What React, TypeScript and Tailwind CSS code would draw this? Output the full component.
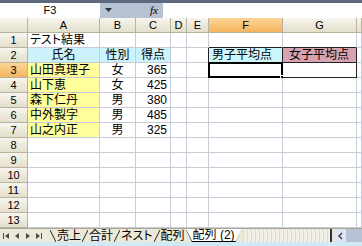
import type { ReactNode } from 'react';

const COLS = ['A', 'B', 'C', 'D', 'E', 'F', 'G', ''];

type Row = { a?: string; b?: string; c?: string };

const rows: Row[] = [
  { a: 'テスト結果' },
  { a: '氏名', b: '性別', c: '得点' },
  { a: '山田真理子', b: '女', c: '365' },
  { a: '山下恵', b: '女', c: '425' },
  { a: '森下仁丹', b: '男', c: '380' },
  { a: '中外製字', b: '男', c: '485' },
  { a: '山之内正', b: '男', c: '325' },
  {}, {}, {}, {}, {}, {},
];

const grid = 'border-r border-b border-[#c7ccd8]';
const head = 'border-r border-b border-[#b7b39f] bg-gradient-to-b from-[#f7f5ee] to-[#e3dfcb]';
const headSel = 'border-r border-b border-[#b7b39f] bg-gradient-to-b from-[#fcd596] to-[#f4b45e]';

function Cell({ className = '', children }: { className?: string; children?: ReactNode }) {
  return <div className={`relative flex items-end overflow-visible whitespace-nowrap leading-[14px] ${className}`}>{children}</div>;
}

function Slash({ dir }: { dir: 'l' | 'r' }) {
  return (
    <svg width="6" height="14" className="shrink-0">
      {dir === 'l' ? <line x1="0" y1="1" x2="6" y2="13" stroke="#222" /> : <line x1="6" y1="1" x2="0" y2="13" stroke="#222" />}
    </svg>
  );
}

function Nav({ kind }: { kind: 'first' | 'prev' | 'next' | 'last' }) {
  return (
    <svg width="10" height="14" className="shrink-0">
      {kind === 'first' && (
        <>
          <rect x="2" y="4" width="1" height="6" fill="#4a4a4a" />
          <polygon points="8,4 4,7 8,10" fill="#4a4a4a" />
        </>
      )}
      {kind === 'prev' && <polygon points="7,4 3,7 7,10" fill="#4a4a4a" />}
      {kind === 'next' && <polygon points="3,4 7,7 3,10" fill="#4a4a4a" />}
      {kind === 'last' && (
        <>
          <polygon points="2,4 6,7 2,10" fill="#4a4a4a" />
          <rect x="7" y="4" width="1" height="6" fill="#4a4a4a" />
        </>
      )}
    </svg>
  );
}

export default function App() {
  return (
    <div className="w-[362px] h-[246px] overflow-hidden bg-white flex flex-col text-black font-['Liberation_Sans','Noto_Sans_CJK_JP',sans-serif]">
      <div className="h-[3px] shrink-0 bg-[#5d6a7e]" />

      {/* name box + formula bar */}
      <div className="h-[15px] shrink-0 flex text-[11px] leading-[15px]">
        <div className="w-[100px] text-center bg-white">F3</div>
        <div className="w-[63px] flex items-center justify-between px-[5px] bg-[#b6c1d2]">
          <svg width="7" height="5"><polygon points="0,0 7,0 3.5,4" fill="#333" /></svg>
          <span className="italic font-['Liberation_Serif',serif] text-[11px]">fx</span>
        </div>
        <div className="flex-1 bg-white" />
      </div>

      {/* sheet */}
      <div className="grid shrink-0 grid-cols-[28px_72px_36px_35px_16px_22px_74px_74px_1fr] auto-rows-[15px] text-[12px]">
        <div className={head} />
        {COLS.map((c, i) => (
          <div key={i} className={`${c === 'F' ? headSel : head} flex items-center justify-center text-[11px]`}>
            {c}
          </div>
        ))}

        {rows.map((r, i) => {
          const n = i + 1;
          return [
            <div key={`h${n}`} className={`${n === 3 ? headSel : head} flex items-center justify-center text-[11px]`}>{n}</div>,
            <Cell
              key={`a${n}`}
              className={`${grid} ${n === 2 ? 'justify-center bg-[#ccf2fb]' : 'pl-[2px]'} ${n >= 3 && n <= 7 ? 'bg-[#ffff9c]' : ''} ${n === 1 ? '[font-feature-settings:"palt"]' : ''}`}
            >
              {r.a}
            </Cell>,
            <Cell key={`b${n}`} className={`${grid} justify-center ${n === 2 ? 'bg-[#ccf2fb]' : ''}`}>{r.b}</Cell>,
            <Cell key={`c${n}`} className={`${grid} ${n === 2 ? 'justify-center bg-[#ccf2fb]' : 'justify-end pr-[3px]'}`}>{r.c}</Cell>,
            <Cell key={`d${n}`} className={grid} />,
            <Cell key={`e${n}`} className={`${grid} ${n === 2 || n === 3 ? 'border-r-[#222]' : ''}`} />,
            <Cell
              key={`f${n}`}
              className={`${grid} ${n === 1 ? 'border-b-[#222]' : ''} ${n === 2 ? 'border-r-[#222] border-b-[#222] bg-[#ccf6fb] pl-[3px]' : ''} ${n === 3 ? 'border-r-[#222] border-b-[#222]' : ''}`}
            >
              {n === 2 && '男子平均点'}
              {n === 3 && (
                <div className="absolute -left-px -top-px -right-px -bottom-px border-2 border-black">
                  <div className="absolute -right-[3px] -bottom-[3px] w-[4px] h-[4px] bg-black border border-white" />
                </div>
              )}
            </Cell>,
            <Cell
              key={`g${n}`}
              className={`${grid} ${n === 1 ? 'border-b-[#222]' : ''} ${n === 2 ? 'border-r-[#222] border-b-[#222] bg-[#d8a3b1] pl-[6px]' : ''} ${n === 3 ? 'border-r-[#222] border-b-[#222]' : ''}`}
            >
              {n === 2 && '女子平均点'}
            </Cell>,
            <Cell key={`x${n}`} className={grid} />,
          ];
        })}
      </div>

      {/* sheet tabs */}
      <div className="h-[14px] shrink-0 flex items-center bg-[#ece9d8] text-[12px] leading-[14px] border-t border-[#a9a694]">
        <div className="w-[50px] flex items-center pl-[1px] gap-[1px]">
          <Nav kind="first" />
          <Nav kind="prev" />
          <Nav kind="next" />
          <Nav kind="last" />
        </div>
        <Slash dir="l" />
        <span className="px-[1px]">売上</span>
        <Slash dir="r" />
        <span className="px-[1px]">合計</span>
        <Slash dir="r" />
        <span className="px-[1px] [font-feature-settings:'palt']">ネスト</span>
        <Slash dir="r" />
        <span className="px-[1px]">配列</span>
        <div className="flex items-center bg-white h-full [clip-path:polygon(0_0,100%_0,calc(100%-6px)_100%,6px_100%)]">
          <Slash dir="l" />
          <span className="px-[1px] border-b border-black leading-[12px]">配列 (2)</span>
          <Slash dir="r" />
        </div>
        <div className="flex-1 h-[12px] ml-[1px] bg-[repeating-linear-gradient(90deg,#dedbcc_0_1px,#f1efe6_1px_4px)]" />
        <div className="w-[3px] h-full bg-[#e9e6d8] border-l-2 border-[#333]" />
        <div className="w-[13px] h-full flex items-center justify-center bg-[#dfe6f0]">
          <svg width="6" height="8"><polyline points="5,1 2,4 5,7" fill="none" stroke="#445" strokeWidth="1.5" /></svg>
        </div>
        <div className="w-[16px] h-full bg-[#b7c2d6]" />
      </div>

      <div className="flex-1 bg-[#cfeaf5]" />
    </div>
  );
}
